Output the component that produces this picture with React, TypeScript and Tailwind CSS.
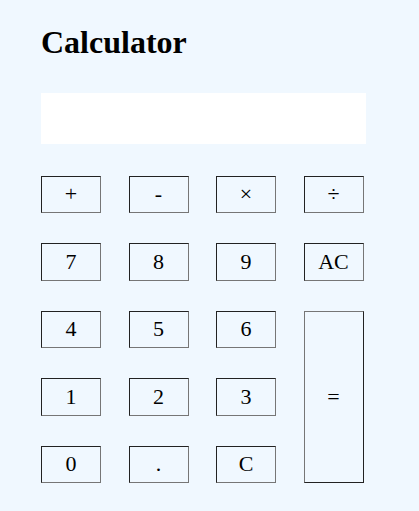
const keys: { label: string; className?: string }[] = [
  { label: "+" },
  { label: "-" },
  { label: "×" },
  { label: "÷" },
  { label: "7" },
  { label: "8" },
  { label: "9" },
  { label: "AC" },
  { label: "4" },
  { label: "5" },
  { label: "6" },
  { label: "=", className: "row-span-3 border-t-[#767676] border-l-[#767676] border-b-[#222] border-r-[#222]" },
  { label: "1" },
  { label: "2" },
  { label: "3" },
  { label: "0" },
  { label: "." },
  { label: "C" },
];

export default function App() {
  return (
    <div className="min-h-screen bg-[#f0f8ff] pl-[41px] pt-[24px] font-[family-name:Liberation_Serif,serif] text-black">
      <h1 className="text-[32px] font-bold leading-[37px]">Calculator</h1>

      <div className="mt-[32px] h-[51px] w-[325px] bg-white" />

      <div className="mt-[31.5px] grid grid-cols-[repeat(4,60px)] grid-rows-[repeat(5,37.5px)] gap-x-[27.5px] gap-y-[30px]">
        {keys.map((key) => (
          <button
            key={key.label}
            className={
              key.className ??
              "border-t-[#222] border-l-[#222] border-b-[#767676] border-r-[#767676]"
            }
            style={{ borderWidth: "1.5px", borderStyle: "solid" }}
          >
            <span className="flex h-full w-full items-center justify-center bg-[#f0f8ff] text-[22px] leading-none">
              {key.label}
            </span>
          </button>
        ))}
      </div>
    </div>
  );
}
